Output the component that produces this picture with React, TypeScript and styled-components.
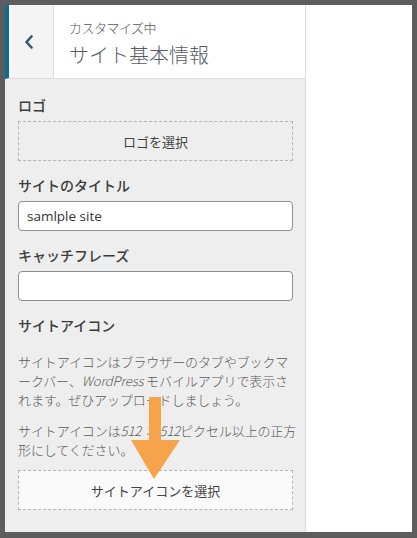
import React from "react";
import styled, { createGlobalStyle } from "styled-components";

const Global = createGlobalStyle`
  html, body { margin: 0; padding: 0; }
  body {
    width: 417px;
    height: 538px;
    overflow: hidden;
    font-family: "Noto Sans", "Noto Sans CJK JP", sans-serif;
  }
`;

const CJK = `"Noto Sans CJK JP", "Noto Sans", sans-serif`;

const Frame = styled.div`
  box-sizing: border-box;
  width: 417px;
  height: 538px;
  padding: 5px 5px 6px 5px;
  background: #5d5d5d;
  position: relative;
`;

const Window = styled.div`
  display: flex;
  height: 100%;
  background: #fff;
`;

const Sidebar = styled.aside`
  box-sizing: border-box;
  width: 301px;
  display: flex;
  flex-direction: column;
  background: #eeeeee;
  border-right: 1px solid #dcdcdc;
`;

const Preview = styled.div`
  flex: 1;
  background: #fff;
`;

const Header = styled.header`
  display: flex;
  height: 74px;
  box-sizing: border-box;
  background: #fff;
  border-bottom: 1px solid #dddddd;
  border-left: 4px solid #0b6c93;
`;

const BackButton = styled.button`
  width: 45px;
  box-sizing: border-box;
  border: none;
  border-right: 1px solid #dddddd;
  background: #f4f4f4;
  display: flex;
  align-items: center;
  justify-content: center;
  padding: 0 4px 0 0;
  margin: 0;
`;

const TitleBlock = styled.div`
  display: flex;
  flex-direction: column;
  padding: 14px 0 0 15px;
  font-family: ${CJK};
`;

const Crumb = styled.span`
  font-size: 13px;
  line-height: 18px;
  color: #555;
  font-weight: 300;
  letter-spacing: -0.5px;
`;

const PanelTitle = styled.span`
  font-size: 20px;
  line-height: 28px;
  margin-top: 4px;
  color: #555d66;
  font-weight: 300;
`;

const Body = styled.div`
  flex: 1;
  padding: 16px 12px 0 13px;
  display: flex;
  flex-direction: column;
  font-family: ${CJK};
`;

const Label = styled.div<{ $top?: number }>`
  font-size: 14px;
  line-height: 20px;
  font-weight: 500;
  color: #3c3c3c;
  margin-top: ${(p) => p.$top ?? 14}px;
  margin-bottom: 6px;
`;

const DashedButton = styled.button<{ $light?: boolean }>`
  box-sizing: border-box;
  width: 100%;
  height: 40px;
  border: 1px dashed #b4b4b4;
  background: ${(p) => (p.$light ? "#fafafa" : "#eeeeee")};
  font-family: ${CJK};
  font-size: 13px;
  color: #444;
  display: flex;
  align-items: center;
  justify-content: center;
  padding: 0;
  margin: 0;
`;

const TextInput = styled.input`
  box-sizing: border-box;
  width: 100%;
  height: 30px;
  border: 1px solid #8c8f94;
  border-radius: 4px;
  background: #fff;
  padding: 0 8px;
  font-family: "Open Sans", "Noto Sans", sans-serif;
  font-size: 13.5px;
  color: #333;
  outline: none;
`;

const Paragraph = styled.p<{ $top: number }>`
  margin: ${(p) => p.$top}px 0 0 0;
  font-size: 13px;
  line-height: 19px;
  color: #5a5a5a;
  font-weight: 300;
  white-space: nowrap;
  letter-spacing: -0.1px;
  em {
    font-style: italic;
  }
`;

const ButtonWrap = styled.div`
  margin-top: 11px;
`;

const ArrowOverlay = styled.svg`
  position: absolute;
  left: 130px;
  top: 396px;
  width: 52px;
  height: 85px;
  pointer-events: none;
`;

export default function App() {
  return (
    <>
      <Global />
      <Frame>
        <Window>
          <Sidebar>
            <Header>
              <BackButton aria-label="戻る">
                <svg width="10" height="14" viewBox="0 0 10 14">
                  <polyline
                    points="7.5,1.5 2.5,7 7.5,12.5"
                    fill="none"
                    stroke="#2f5a78"
                    strokeWidth="2.6"
                    strokeLinecap="round"
                    strokeLinejoin="round"
                  />
                </svg>
              </BackButton>
              <TitleBlock>
                <Crumb>カスタマイズ中</Crumb>
                <PanelTitle>サイト基本情報</PanelTitle>
              </TitleBlock>
            </Header>
            <Body>
              <Label $top={0}>ロゴ</Label>
              <DashedButton>ロゴを選択</DashedButton>
              <Label>サイトのタイトル</Label>
              <TextInput defaultValue="samlple site" />
              <Label>キャッチフレーズ</Label>
              <TextInput defaultValue="" />
              <Label>サイトアイコン</Label>
              <Paragraph $top={11}>
                サイトアイコンはブラウザーのタブやブックマ
                <br />
                ークバー、<em>WordPress</em> モバイルアプリで表示さ
                <br />
                れます。ぜひアップロードしましょう。
              </Paragraph>
              <Paragraph $top={12}>
                サイトアイコンは<em>512 × 512</em>ピクセル以上の正方
                <br />
                形にしてください。
              </Paragraph>
              <ButtonWrap>
                <DashedButton $light>サイトアイコンを選択</DashedButton>
              </ButtonWrap>
            </Body>
          </Sidebar>
          <Preview />
        </Window>
        <ArrowOverlay viewBox="0 0 52 85">
          <rect x="19" y="1" width="12" height="44" fill="#f6a34b" />
          <polygon points="1,44 50,44 24,83" fill="#f6a34b" />
        </ArrowOverlay>
      </Frame>
    </>
  );
}
